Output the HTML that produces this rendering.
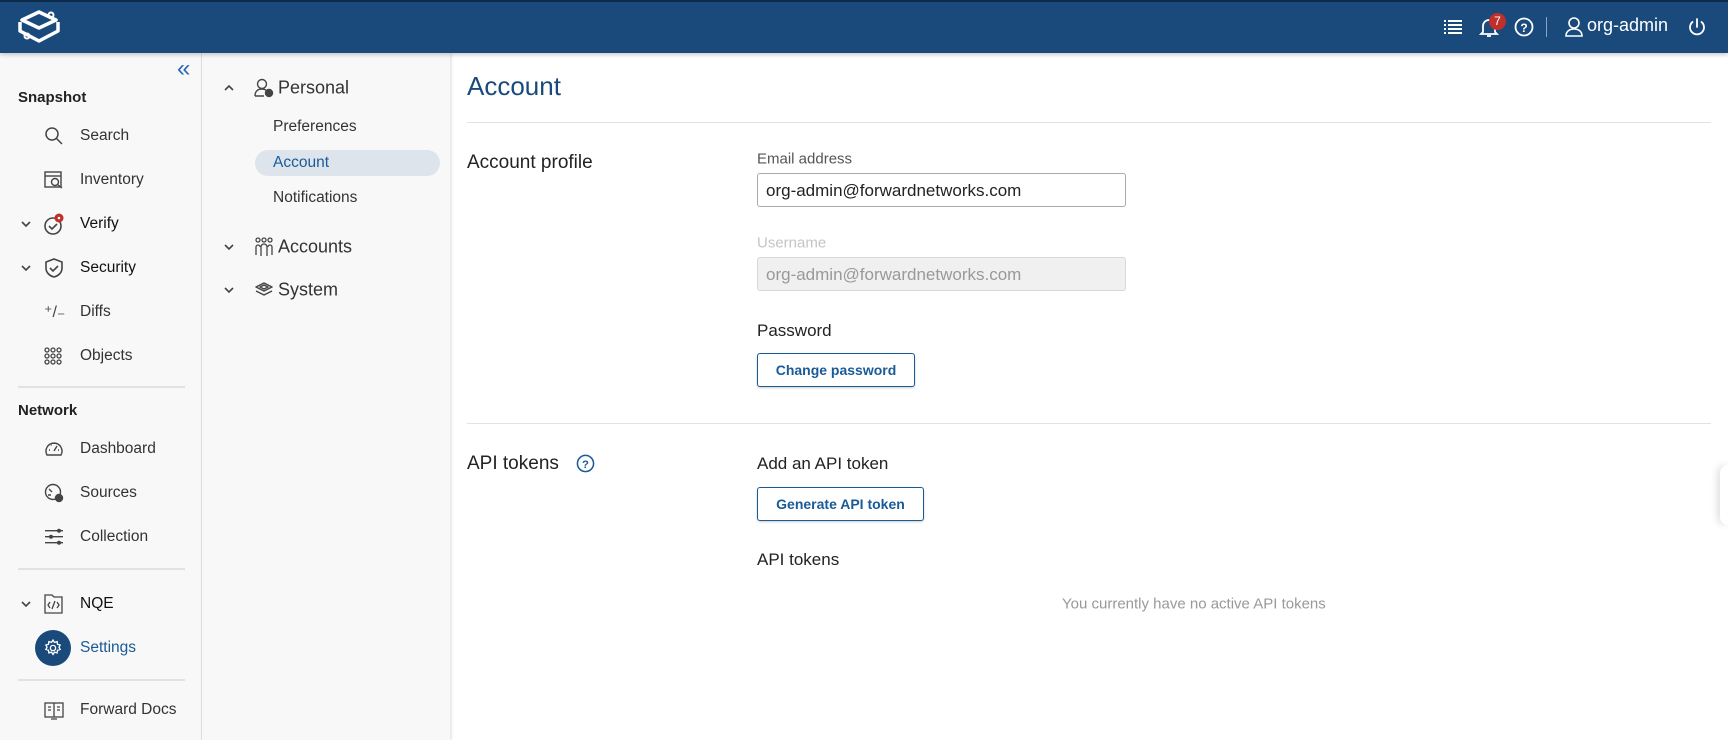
<!DOCTYPE html>
<html><head><meta charset="utf-8"><style>
*{box-sizing:border-box;margin:0;padding:0}
body{width:1728px;height:740px;overflow:hidden;font-family:"Liberation Sans",sans-serif;background:#fff;position:relative;color:#333}
.abs{position:absolute;white-space:nowrap}
#hdr{position:absolute;left:0;top:0;width:1728px;height:53px;background:#1a4a7c;border-top:2px solid #0d2a48;box-shadow:0 2px 4px rgba(0,0,0,.2);z-index:5}
#side{position:absolute;left:0;top:53px;width:202px;height:687px;background:#f8f8f8;border-right:1px solid #e4e4e4}
#sub{position:absolute;left:202px;top:53px;width:248px;height:687px;background:#f8f8f8;box-shadow:1px 0 3px rgba(0,0,0,.15)}
.sec{font-size:15px;font-weight:bold;color:#222;left:18px}
.it{font-size:15.5px;color:#333;left:80px;transform:translateY(-50%)}
.ic{left:44px;transform:translateY(-50%)}
.chev{left:20px;transform:translateY(-50%)}
.hr{position:absolute;height:2px;background:#e2e2e2}
.sb{font-size:15.5px;color:#333;left:273px;transform:translateY(-50%)}
.sh{font-size:18px;color:#333;left:278px;transform:translateY(-50%)}
.lbl{font-size:16px;color:#333;transform:translateY(-50%)}
.inp{position:absolute;left:757px;width:369px;height:34px;border:1px solid #aaa;border-radius:3px;font-size:17px;padding:7px 8px;color:#222}
.btn{position:absolute;left:757px;height:34px;border:1px solid #1a5a96;border-radius:3px;font-size:14px;font-weight:bold;color:#1a5a96;text-align:center;line-height:32px;box-shadow:0 1px 2px rgba(0,0,0,.2);background:#fff}
</style></head><body>
<div id="hdr">
<svg class="abs" style="left:16px;top:6px" width="46" height="38" viewBox="0 0 46 38" fill="none" stroke="#fff" stroke-width="3.5" stroke-linejoin="round"><path d="M23 4 L40 12 L23 20 L6 12 Z"/><path d="M4 18 L4 23 L23 33 L42 23 L42 18"/><path d="M4 14 L4 18"/><path d="M42 14 L42 18"/><circle cx="35" cy="7" r="2.5" stroke-width="2"/><circle cx="11" cy="28" r="2.5" stroke-width="2"/></svg>
<svg class="abs" style="left:1443px;top:16px" width="20" height="18" viewBox="0 0 20 18" fill="#fff"><rect x="1" y="2" width="2" height="2"/><rect x="5" y="2" width="14" height="2"/><rect x="1" y="6" width="2" height="2"/><rect x="5" y="6" width="14" height="2"/><rect x="1" y="10" width="2" height="2"/><rect x="5" y="10" width="14" height="2"/><rect x="1" y="14" width="2" height="2"/><rect x="5" y="14" width="14" height="2"/></svg>
<svg class="abs" style="left:1479px;top:14px" width="20" height="22" viewBox="0 0 20 22" fill="none" stroke="#fff" stroke-width="1.8"><path d="M4 16 V10 a6 6 0 0 1 12 0 V16 L18 18 H2 Z"/><path d="M8 20 h4"/></svg>
<div class="abs" style="left:1489px;top:11px;width:17px;height:17px;border-radius:50%;background:#c0302b;color:#fff;font-size:12px;text-align:center;line-height:17px">7</div>
<svg class="abs" style="left:1514px;top:15px" width="20" height="20" viewBox="0 0 20 20"><circle cx="10" cy="10" r="8.5" fill="none" stroke="#fff" stroke-width="1.8"/><text x="10" y="15" fill="#fff" font-size="12" font-weight="bold" text-anchor="middle" font-family="Liberation Sans">?</text></svg>
<div class="abs" style="left:1546px;top:15px;width:1px;height:20px;background:#8aa4c0"></div>
<svg class="abs" style="left:1564px;top:14px" width="20" height="22" viewBox="0 0 20 22" fill="none" stroke="#fff" stroke-width="1.6"><circle cx="10" cy="7" r="5"/><path d="M2 20 c0-5 4-7 8-7 s8 2 8 7 Z"/></svg>
<div class="abs" style="left:1587px;top:13px;font-size:18px;color:#fff">org-admin</div>
<svg class="abs" style="left:1687px;top:15px" width="20" height="20" viewBox="0 0 20 20" fill="none" stroke="#fff" stroke-width="1.8" stroke-linecap="round"><path d="M10 2 v8"/><path d="M5.5 5 a7 7 0 1 0 9 0"/></svg>
</div>

<div id="side"></div>
<div id="sub"></div>
<div class="abs" style="left:177px;top:55px;font-size:24px;color:#2a6ab0">«</div>
<div class="abs sec" style="top:89px">Snapshot</div>
<svg class="abs ic" style="top:136px" width="20" height="20" viewBox="0 0 20 20" fill="none" stroke="#444" stroke-width="1.5"><circle cx="8" cy="8" r="6"/><path d="M12.5 12.5 L18 18"/></svg>
<div class="abs it" style="top:136px">Search</div>
<svg class="abs ic" style="top:180px" width="20" height="20" viewBox="0 0 20 20" fill="none" stroke="#444" stroke-width="1.4"><rect x="1" y="2" width="16" height="15"/><path d="M1 6h16"/><circle cx="11" cy="12" r="3.5"/><path d="M13.5 14.5 L18 18"/></svg>
<div class="abs it" style="top:180px">Inventory</div>
<svg class="abs chev" style="top:224px" width="12" height="8" viewBox="0 0 12 8" fill="none" stroke="#444" stroke-width="1.6"><path d="M2 2 l4 4 l4-4"/></svg>
<svg class="abs ic" style="top:224px" width="22" height="22" viewBox="0 0 22 22" fill="none" stroke="#444" stroke-width="1.6"><circle cx="9" cy="13" r="8"/><path d="M5 13 l3 3 l5-5"/><circle cx="15" cy="5" r="4.5" fill="#c0302b" stroke="none"/><circle cx="15" cy="5" r="1.3" fill="#fff" stroke="none"/></svg>
<div class="abs it" style="top:224px;color:#111">Verify</div>
<svg class="abs chev" style="top:268px" width="12" height="8" viewBox="0 0 12 8" fill="none" stroke="#444" stroke-width="1.6"><path d="M2 2 l4 4 l4-4"/></svg>
<svg class="abs ic" style="top:268px" width="20" height="20" viewBox="0 0 20 20" fill="none" stroke="#444" stroke-width="1.6"><path d="M10 1 L18 4 V10 C18 15 14 18 10 19 C6 18 2 15 2 10 V4 Z"/><path d="M6 10 l3 3 l5-5"/></svg>
<div class="abs it" style="top:268px;color:#111">Security</div>
<div class="abs ic" style="top:312px;font-size:16px;color:#444">⁺/₋</div>
<div class="abs it" style="top:312px">Diffs</div>
<svg class="abs ic" style="top:356px" width="18" height="18" viewBox="0 0 18 18" fill="none" stroke="#444" stroke-width="1.3"><circle cx="3" cy="3" r="2"/><circle cx="9" cy="3" r="2"/><circle cx="15" cy="3" r="2"/><circle cx="3" cy="9" r="2"/><circle cx="9" cy="9" r="2"/><circle cx="15" cy="9" r="2"/><circle cx="3" cy="15" r="2"/><circle cx="9" cy="15" r="2"/><circle cx="15" cy="15" r="2"/></svg>
<div class="abs it" style="top:356px">Objects</div>
<div class="hr" style="left:18px;top:386px;width:167px"></div>
<div class="abs sec" style="top:402px">Network</div>
<svg class="abs ic" style="top:449px" width="20" height="20" viewBox="0 0 20 20" fill="none" stroke="#444" stroke-width="1.4"><path d="M3 16 A8 8 0 1 1 17 16 Z"/><path d="M10 12 L13 7"/><path d="M5 11h1M14 11h1M7 6l.5.5M10 4v1"/></svg>
<div class="abs it" style="top:449px">Dashboard</div>
<svg class="abs ic" style="top:493px" width="20" height="20" viewBox="0 0 20 20" fill="none" stroke="#444" stroke-width="1.4"><circle cx="9" cy="9" r="7.5"/><path d="M5 6 l3 3 M4 12 h3"/><circle cx="15" cy="15" r="3.5" fill="#444"/></svg>
<div class="abs it" style="top:493px">Sources</div>
<svg class="abs ic" style="top:537px" width="20" height="20" viewBox="0 0 20 20" fill="#444"><rect x="1" y="3" width="18" height="1.4"/><rect x="1" y="9" width="18" height="1.4"/><rect x="1" y="15" width="18" height="1.4"/><circle cx="15" cy="3.7" r="2"/><circle cx="7" cy="9.7" r="2"/><circle cx="15" cy="15.7" r="2"/></svg>
<div class="abs it" style="top:537px">Collection</div>
<div class="hr" style="left:18px;top:568px;width:167px"></div>
<svg class="abs chev" style="top:604px" width="12" height="8" viewBox="0 0 12 8" fill="none" stroke="#444" stroke-width="1.6"><path d="M2 2 l4 4 l4-4"/></svg>
<svg class="abs ic" style="top:604px" width="19" height="20" viewBox="0 0 19 20" fill="none" stroke="#444" stroke-width="1.3"><path d="M1 1 h7 l2 2 h8 v16 h-17 Z"/><path d="M6 8 l-2 3 l2 3 M13 8 l2 3 l-2 3 M11 7 l-3 8"/></svg>
<div class="abs it" style="top:604px;color:#111">NQE</div>
<div class="abs" style="left:35px;top:630px;width:36px;height:36px;border-radius:50%;background:#1a4a7c"></div>
<svg class="abs" style="left:44px;top:639px" width="18" height="18" viewBox="0 0 24 24" fill="none" stroke="#fff" stroke-width="1.8"><circle cx="12" cy="12" r="3.5"/><path d="M12 1.5l2 3 3.5-1 .5 3.5 3.5 1-1.5 3 1.5 3-3.5 1-.5 3.5-3.5-1-2 3-2-3-3.5 1-.5-3.5-3.5-1 1.5-3-1.5-3 3.5-1 .5-3.5 3.5 1z"/></svg>
<div class="abs it" style="top:648px;color:#1a5a96">Settings</div>
<div class="hr" style="left:18px;top:679px;width:167px"></div>
<svg class="abs ic" style="top:710px" width="20" height="20" viewBox="0 0 20 20" fill="none" stroke="#444" stroke-width="1.3"><rect x="1" y="3" width="18" height="14"/><path d="M10 3 v14 M4 7h3M4 10h3M13 7h3M13 10h3M7 19h6"/></svg>
<div class="abs it" style="top:710px">Forward Docs</div>

<svg class="abs" style="left:223px;top:84px" width="12" height="8" viewBox="0 0 12 8" fill="none" stroke="#444" stroke-width="1.6"><path d="M2 6 l4-4 l4 4"/></svg>
<svg class="abs" style="left:254px;top:78px" width="20" height="20" viewBox="0 0 20 20" fill="none" stroke="#444" stroke-width="1.4"><circle cx="8" cy="6" r="4.5"/><path d="M1 18 c0-5 3-7 7-7 2 0 3 .5 4 1 M1 18 h9"/><circle cx="15" cy="15" r="3.5" fill="#444"/></svg>
<div class="abs sh" style="top:88px">Personal</div>
<div class="abs sb" style="top:127px">Preferences</div>
<div class="abs" style="left:255px;top:150px;width:185px;height:26px;border-radius:13px;background:#dde4ec"></div>
<div class="abs sb" style="top:163px;color:#1a5a96">Account</div>
<div class="abs sb" style="top:198px">Notifications</div>
<svg class="abs" style="left:223px;top:243px" width="12" height="8" viewBox="0 0 12 8" fill="none" stroke="#444" stroke-width="1.6"><path d="M2 2 l4 4 l4-4"/></svg>
<svg class="abs" style="left:254px;top:237px" width="20" height="20" viewBox="0 0 20 20" fill="none" stroke="#444" stroke-width="1.3"><circle cx="4" cy="3" r="2"/><circle cx="10" cy="3" r="2"/><circle cx="16" cy="3" r="2"/><path d="M2 18 V10 a2 2 0 0 1 4 0 M14 10 a2 2 0 0 1 4 0 V18 M7 19 V10 a3 3 0 0 1 6 0 V19"/></svg>
<div class="abs sh" style="top:247px">Accounts</div>
<svg class="abs" style="left:223px;top:286px" width="12" height="8" viewBox="0 0 12 8" fill="none" stroke="#444" stroke-width="1.6"><path d="M2 2 l4 4 l4-4"/></svg>
<svg class="abs" style="left:254px;top:281px" width="20" height="18" viewBox="0 0 20 18" fill="none" stroke="#444" stroke-width="1.5" stroke-linejoin="round"><path d="M10 2 L18 6 L10 10 L2 6 Z"/><path d="M2 10 L10 14 L18 10"/><path d="M6 6 L10 4 L14 6 L10 8 Z"/></svg>
<div class="abs sh" style="top:290px">System</div>

<div class="abs" style="left:467px;top:71px;font-size:26px;color:#1a4a7c">Account</div>
<div class="hr" style="left:467px;top:122px;width:1244px;height:1px"></div>
<div class="abs" style="left:467px;top:152px;font-size:19px;color:#222">Account profile</div>
<div class="abs lbl" style="left:757px;top:159px;font-size:15px;color:#555">Email address</div>
<div class="inp" style="top:173px">org-admin@forwardnetworks.com</div>
<div class="abs lbl" style="left:757px;top:243px;font-size:15px;color:#c4c4c4">Username</div>
<div class="inp" style="top:257px;background:#f0f0f0;border-color:#d8d8d8;color:#999">org-admin@forwardnetworks.com</div>
<div class="abs lbl" style="left:757px;top:331px;font-size:17px;color:#222">Password</div>
<div class="btn" style="top:353px;width:158px">Change password</div>
<div class="hr" style="left:467px;top:423px;width:1244px;height:1px"></div>
<div class="abs" style="left:467px;top:453px;font-size:19px;color:#222">API tokens</div>
<svg class="abs" style="left:576px;top:454px" width="19" height="19" viewBox="0 0 20 20"><circle cx="10" cy="10" r="8.5" fill="none" stroke="#1a5a96" stroke-width="1.6"/><text x="10" y="14.5" fill="#1a5a96" font-size="12" font-weight="bold" text-anchor="middle" font-family="Liberation Sans">?</text></svg>
<div class="abs lbl" style="left:757px;top:464px;font-size:17px;color:#222">Add an API token</div>
<div class="btn" style="top:487px;width:167px">Generate API token</div>
<div class="abs lbl" style="left:757px;top:560px;font-size:17px;color:#222">API tokens</div>
<div class="abs lbl" style="left:1062px;top:604px;font-size:15px;color:#999">You currently have no active API tokens</div>
<div class="abs" style="left:1720px;top:465px;width:8px;height:60px;border-radius:8px 0 0 8px;box-shadow:-2px 0 8px rgba(0,0,0,.15);background:#fff"></div>
</body></html>
